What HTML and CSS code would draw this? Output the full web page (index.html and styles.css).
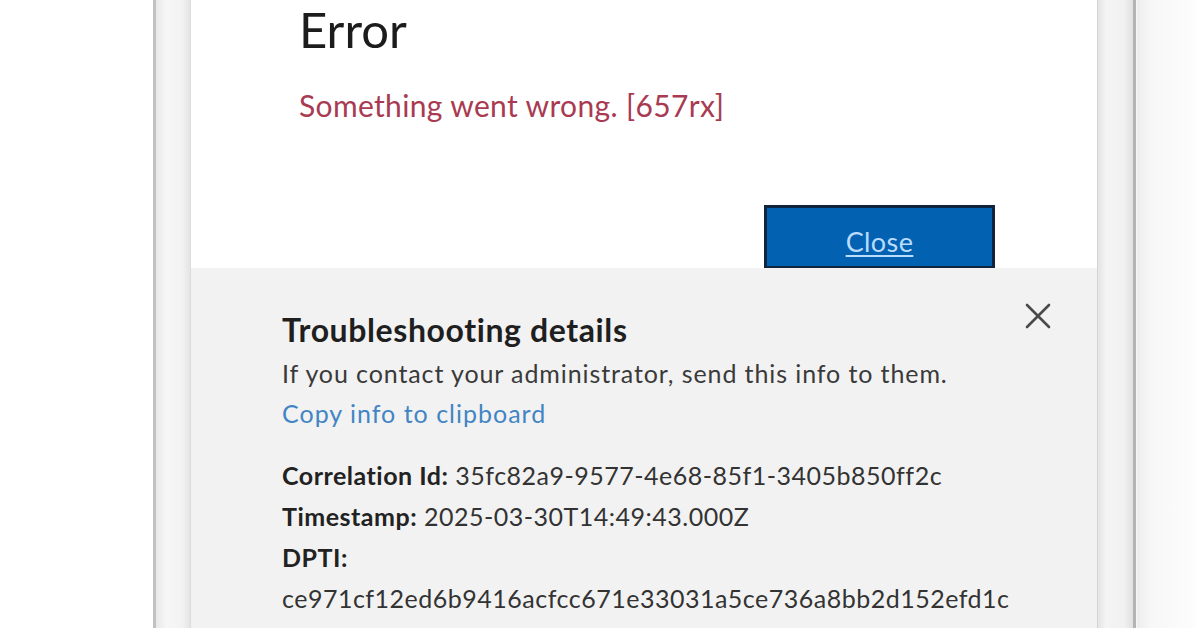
FILE: index.html
```html
<!DOCTYPE html>
<html lang="en">
<head>
<meta charset="utf-8">
<title>Error</title>
<link rel="stylesheet" href="styles.css">
</head>
<body>
<div class="screen">
  <div class="frame">
    <div class="dialog">
      <section class="main">
        <h1 class="title">Error</h1>
        <p class="message">Something went wrong. [657rx]</p>
        <div class="actions"><button class="btn-close" type="button">Close</button></div>
      </section>
      <section class="details">
        <div class="details-head">
          <div class="details-intro">
            <h2 class="details-title">Troubleshooting details</h2>
            <p class="details-text">If you contact your administrator, send this info to them.</p>
            <a class="copy-link" href="#">Copy info to clipboard</a>
          </div>
          <button class="dismiss" type="button" aria-label="Close">
            <svg viewBox="0 0 26 26" width="26" height="26"><path d="M2 2 L24 24 M24 2 L2 24" stroke="#4a4a4a" stroke-width="2.6" stroke-linecap="round" fill="none"/></svg>
          </button>
        </div>
        <div class="info">
          <div class="info-row"><span class="label">Correlation Id:</span> 35fc82a9-9577-4e68-85f1-3405b850ff2c</div>
          <div class="info-row"><span class="label">Timestamp:</span> 2025-03-30T14:49:43.000Z</div>
          <div class="info-row"><span class="label">DPTI:</span></div>
          <div class="info-row">ce971cf12ed6b9416acfcc671e33031a5ce736a8bb2d152efd1c</div>
        </div>
      </section>
    </div>
  </div>
</div>
</body>
</html>
```
FILE: styles.css
```css
html, body {
  margin: 0;
  padding: 0;
}
body {
  background: #ffffff;
  font-family: "Lato", "Open Sans", sans-serif;
  color: #262626;
  overflow: hidden;
}
.screen {
  height: 628px;
  display: flex;
  padding-left: 153px;
  background: linear-gradient(90deg, #ffffff 0, #ffffff 1136px, #ededed 1137px, #f7f7f7 1150px, #fdfdfd 1196px);
}
.frame {
  display: flex;
  box-sizing: border-box;
  width: 983px;
  flex: none;
  border-left: 3px solid #c2c2c2;
  border-right: 3px solid #b4b4b4;
  padding: 0 35px 0 34px;
  background: linear-gradient(90deg, #e8e8e8 0, #f6f6f6 10px, #f3f3f3 26px, #e4e4e4 34px, #e6e6e6 943px, #f4f4f4 950px, #f1f1f1 968px, #e0e0e0 977px);
}
.dialog {
  flex: 1;
  display: flex;
  flex-direction: column;
  background: #ffffff;
  border-left: 1px solid #dcdcdc;
  border-right: 1px solid #d4d4d4;
}
.main {
  padding: 0 102px 0 108px;
}
.title {
  margin: 1px 0 0;
  font-size: 49px;
  line-height: 56px;
  font-weight: 400;
  color: #1c1c1c;
}
.message {
  margin: 30px 0 0;
  font-size: 30px;
  line-height: 36px;
  letter-spacing: 0.35px;
  color: #a83a52;
}
.actions {
  display: flex;
  justify-content: flex-end;
  margin-top: 82px;
}
.btn-close {
  box-sizing: border-box;
  width: 231px;
  height: 63px;
  background: #0262b1;
  border: 3px solid #10233f;
  border-bottom-width: 2px;
  color: #b9dcff;
  font-family: inherit;
  font-size: 27px;
  letter-spacing: 0.4px;
  text-decoration: underline;
  text-underline-offset: 3px;
  padding: 8px 0 0;
}
.details {
  flex: 1;
  background: #f2f2f2;
  padding: 44px 46px 0 91px;
}
.details-head {
  display: flex;
  justify-content: space-between;
  align-items: flex-start;
}
.details-title {
  margin: 0;
  font-size: 32px;
  line-height: 36px;
  letter-spacing: 0.6px;
  font-weight: 700;
  color: #1f1f1f;
}
.details-text {
  margin: 5px 0 0;
  font-size: 25px;
  line-height: 40px;
  letter-spacing: 0.9px;
  color: #3a3a3a;
}
.copy-link {
  display: block;
  font-size: 25px;
  line-height: 40px;
  letter-spacing: 1px;
  color: #4285c4;
  text-decoration: none;
}
.dismiss {
  background: none;
  border: 0;
  padding: 0;
  margin-top: -9px;
  width: 26px;
  height: 26px;
}
.dismiss svg {
  display: block;
}
.info {
  margin-top: 22px;
}
.info-row {
  font-size: 25px;
  line-height: 41px;
  letter-spacing: 0.5px;
  color: #333333;
  white-space: nowrap;
}
.label {
  font-weight: 700;
  color: #222222;
}
```
